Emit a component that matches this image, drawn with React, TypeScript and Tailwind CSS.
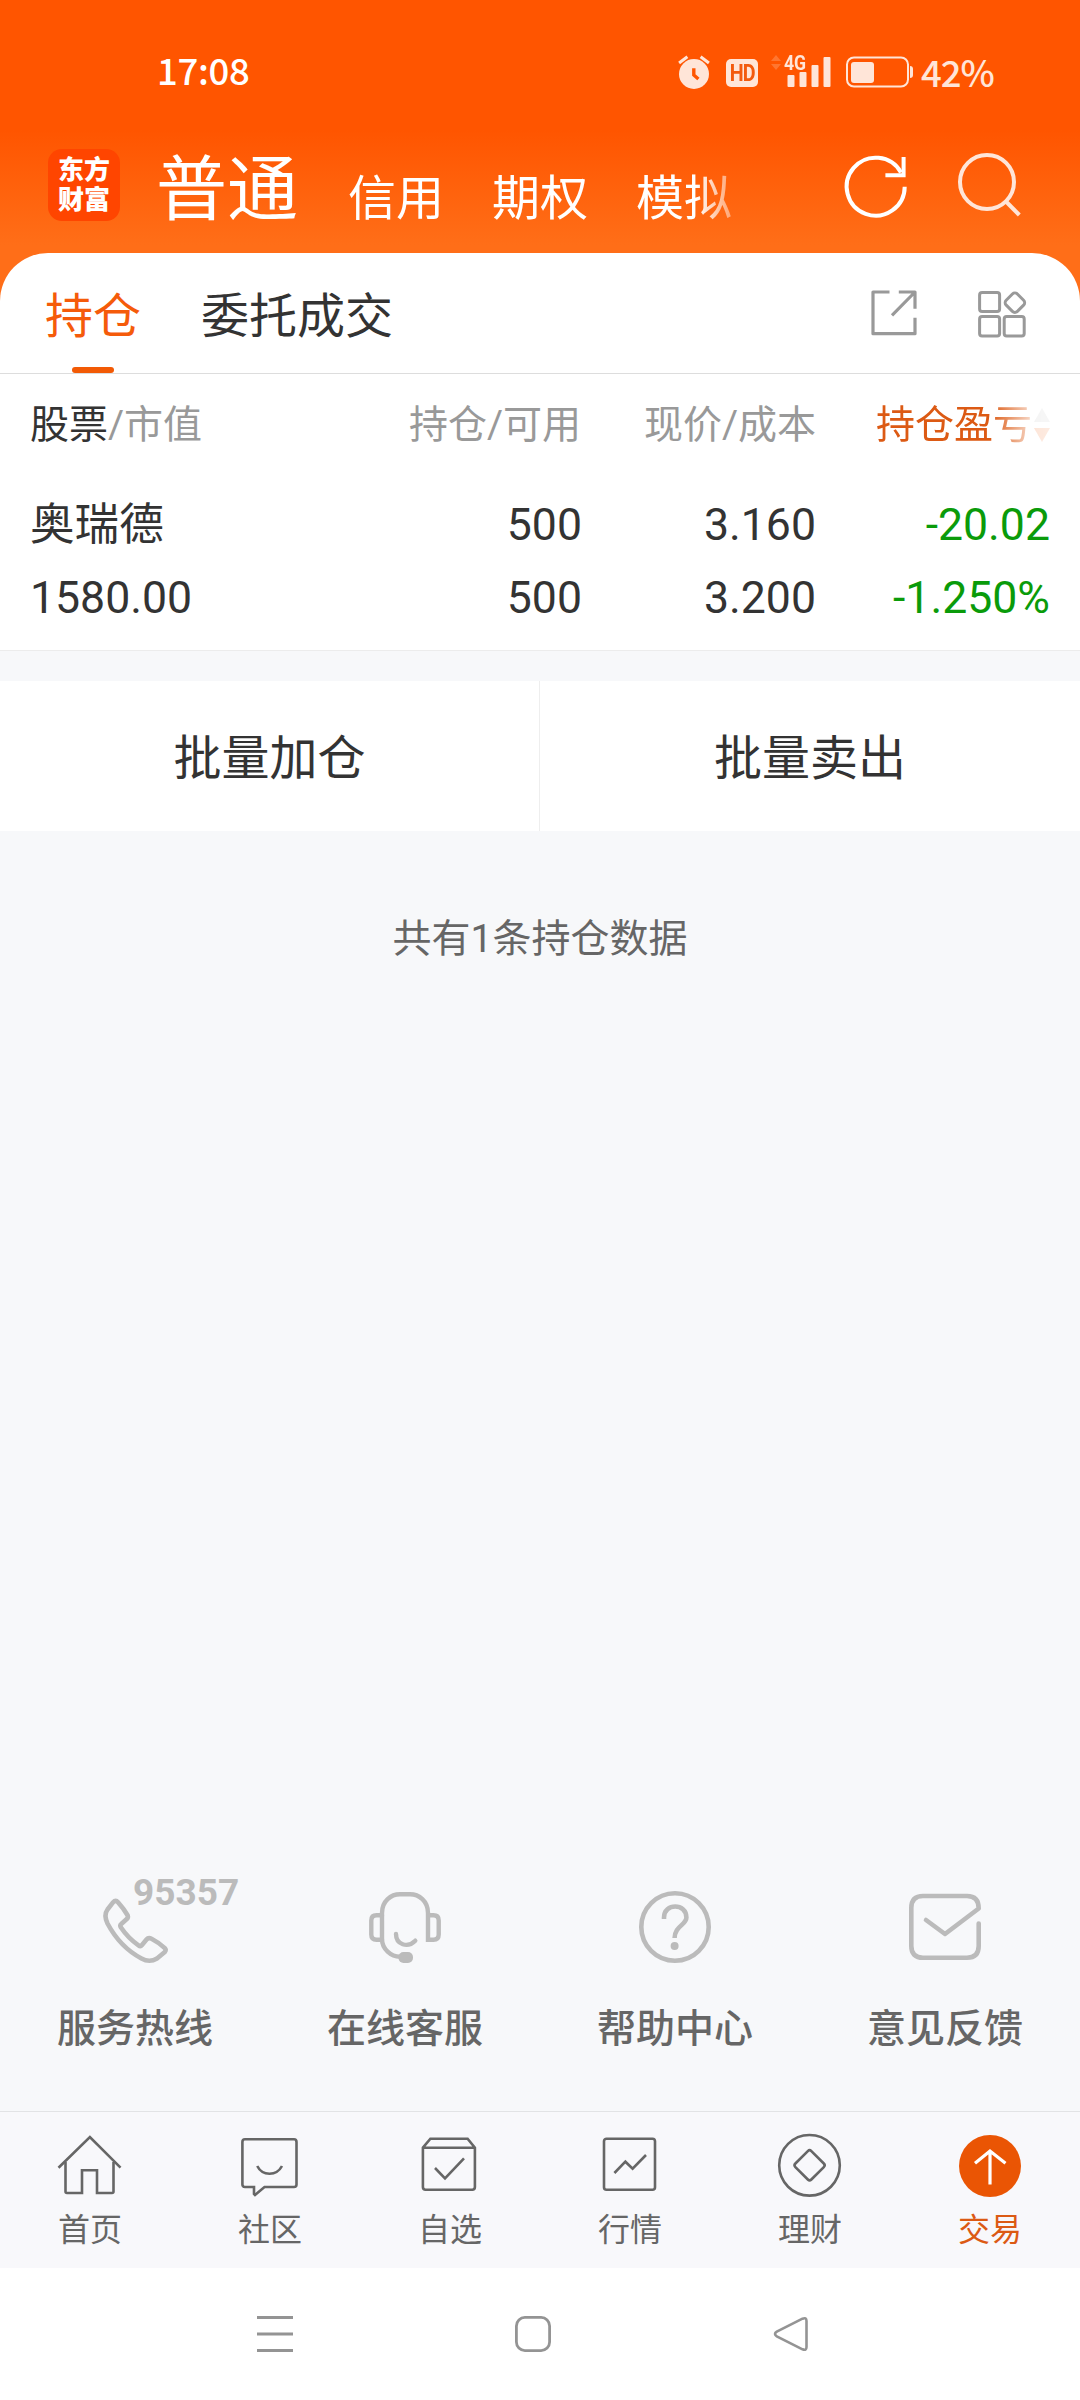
import React from 'react';

const StatusBar: React.FC = () => (
  <div className="h-[124px] pt-[49px] pl-[157px] pr-[87px] flex items-start justify-between font-['Noto_Sans_CJK_SC',sans-serif]">
    <span className="-mt-[3px] text-[36.5px] leading-[48px] font-medium text-white tracking-[-0.3px]">17:08</span>
    <div className="flex items-start text-[#ffe5d8]">
      <svg className="w-8 h-[34px] mt-1.5 overflow-visible" viewBox="0 0 32 34" fill="none">
        <circle cx="16" cy="19" r="15" fill="currentColor" />
        <path d="M1.1 8L9.4 1.7M30.9 8L22.6 1.7" stroke="currentColor" strokeWidth="3" />
        <path d="M15.8 13.3V20L20.4 24" stroke="#ff5500" strokeWidth="3.4" />
      </svg>
      <div className="w-8 h-7 mt-2.5 ml-4 rounded-[5px] bg-[#ffe5d8] flex items-center justify-center">
        <span className="font-['Roboto',sans-serif] font-bold text-[24px] leading-7 tracking-[-1px] scale-x-[0.82] text-[#f35a0e]">HD</span>
      </div>
      <svg className="w-[10px] h-4 mt-1.5 ml-[13px]" viewBox="0 0 10 16" fill="#ff7630">
        <path d="M5 0L10 6H0ZM5 15L0 9H10Z" />
      </svg>
      <div className="relative w-[50px] h-8 mt-1.5 ml-[3px]">
        <svg className="w-[50px] h-8" viewBox="0 0 50 32" fill="currentColor">
          <rect x="3.5" y="20" width="7" height="12" rx="1" />
          <rect x="15.5" y="17" width="7" height="15" rx="1" />
          <rect x="27.5" y="10" width="7" height="22" rx="1" />
          <rect x="39.5" y="2" width="7" height="30" rx="1" />
        </svg>
        <span className="absolute left-0 top-0 origin-left scale-x-[0.84] font-['Roboto',sans-serif] font-bold text-[21px] leading-4">4G</span>
      </div>
      <svg className="w-[68px] h-8 mt-[7px] ml-3" viewBox="0 0 68 32" fill="none">
        <rect x="1" y="1.5" width="61" height="29" rx="7" stroke="currentColor" strokeWidth="2" />
        <rect x="5" y="6" width="23" height="21" rx="3" fill="currentColor" />
        <path d="M64 10q3 0 3 3v6q0 3-3 3z" fill="currentColor" />
      </svg>
      <span className="w-[72px] -mt-0.5 ml-[7px] text-[36.5px] leading-[50px] font-medium tracking-[-1px] whitespace-nowrap">42%</span>
    </div>
  </div>
);

const Header: React.FC = () => (
  <header className="h-[301px] bg-[linear-gradient(to_bottom,#ff5500_130px,#ff6e18_245px)] text-white">
    <StatusBar />
    <div className="flex items-start pl-12">
      <div className="w-[72px] h-[72px] mt-[25px] rounded-[14px] bg-[#ff4500] flex items-center justify-center text-center text-[26px] leading-[30px] font-black">
        东方
        <br />
        财富
      </div>
      <nav className="w-[660px] h-[100px] pl-9 flex gap-12 text-5xl [mask-image:linear-gradient(to_right,black_576px,transparent_636px)]">
        <span className="w-36 text-[71px] leading-[84px] pt-6">普通</span>
        <span className="leading-[58px] pt-[46px]">信用</span>
        <span className="leading-[58px] pt-[46px]">期权</span>
        <span className="leading-[58px] pt-[46px]">模拟</span>
      </nav>
      <svg className="w-[62px] h-[62px] mt-[31px] ml-[65px] overflow-visible" viewBox="0 0 62 62" fill="none" stroke="currentColor" strokeWidth="4">
        <path d="M59.7 31.7A29 29 0 1 1 56 17.5" />
        <path d="M40.4 20.3H58.6V2" />
      </svg>
      <svg className="w-[62px] h-[62px] mt-[29px] ml-[51px] overflow-visible text-[#ffe5d8]" viewBox="0 0 62 62" fill="none" stroke="currentColor" strokeWidth="4">
        <circle cx="29" cy="29" r="27" />
        <path d="M47.5 48L61.3 62" />
      </svg>
    </div>
  </header>
);

const Tabs: React.FC = () => (
  <div className="h-[121px] pl-[45px] pr-[53px] flex items-start border-b border-[#dddddd] text-5xl">
    <div className="w-24 h-[120px] flex flex-col items-center justify-between text-[#f55b0a]">
      <span className="pt-[35px] leading-[58px]">持仓</span>
      <span className="w-[42px] h-[6px] rounded-full bg-[#f25a05]" />
    </div>
    <span className="ml-[60px] pt-[35px] leading-[58px] text-[#333333]">委托成交</span>
    <svg className="w-[47px] h-[47px] mt-[37px] ml-auto" viewBox="0 0 47 47" fill="none" stroke="#999999" strokeWidth="3.2" strokeLinejoin="round">
      <path d="M18.5 2H2V43.7H44V27.7" />
      <path d="M27.8 2H44V18.7M44 2L21 25.3" />
    </svg>
    <svg className="w-[50px] h-[50px] mt-[37px] ml-[59px]" viewBox="0 0 50 50" fill="none" stroke="#999999" strokeWidth="3">
      <rect x="2.6" y="2.5" width="20" height="19" rx="2.5" />
      <rect x="2.6" y="26.6" width="20" height="19.4" rx="2.5" />
      <rect x="27.2" y="26.6" width="20" height="19.4" rx="2.5" />
      <rect x="30" y="4.8" width="15.8" height="15.8" rx="3.5" transform="rotate(45 37.9 12.7)" />
    </svg>
  </div>
);

const Holdings: React.FC = () => (
  <section className="h-[277px] pl-[30px] pr-[30px] border-b border-[#ececec] text-[#333333]">
    <div className="flex pt-[26px] text-[39px] leading-[50px] text-[#999999]">
      <div className="w-[304px]">
        <span className="text-[#333333]">股票</span>/市值
      </div>
      <div className="w-[247px] text-right">持仓/可用</div>
      <div className="w-[235px] text-right">现价/成本</div>
      <div className="w-[234px] flex items-center justify-end text-[#dc5a14] [mask-image:linear-gradient(to_right,black_174px,rgba(0,0,0,0.15)_220px,rgba(0,0,0,0.12))]">
        持仓盈亏
        <svg className="w-4 h-[34px] ml-0.5" viewBox="0 0 16 34">
          <path d="M8 0L16 14H0Z" fill="#bbbbbb" />
          <path d="M8 34L0 20H16Z" fill="#f25a05" />
        </svg>
      </div>
    </div>
    <div className="flex pt-[39px] text-[44.6px] leading-[73px]">
      <div className="w-[304px]">
        奥瑞德
        <br />
        1580.00
      </div>
      <div className="w-[248px] text-right">
        500
        <br />
        500
      </div>
      <div className="w-[234px] text-right">
        3.160
        <br />
        3.200
      </div>
      <div className="w-[234px] text-right text-[#0a9b0a]">
        -20.02
        <br />
        -1.250%
      </div>
    </div>
  </section>
);

const services = [
  {
    label: '服务热线',
    icon: (
      <div className="relative w-[72px] h-[72px]">
        <svg className="w-[72px] h-[72px] overflow-visible" viewBox="-4 -7 72 72" fill="none" stroke="currentColor" strokeWidth="4.6" strokeLinejoin="round">
          <path d="M10.2 4.2Q12.6 1.5 15 4.3Q21 11 24.7 17.5Q25.5 19.5 23.5 21.3L18.5 25.8Q16.5 27.5 18 29.5Q25 40 35.5 47.3Q37.5 48.8 39 47L43.5 41.5Q45.5 39 48.5 40.7Q56 44.5 61.8 50.2Q63.5 52 61.8 54L54 60.5Q46.5 65 38.5 60.5Q17 49 4.5 25.5Q.5 17 4.5 11.5Z" />
        </svg>
        <span className="absolute left-[34px] -top-[14px] text-[37px] leading-[32px] font-bold">95357</span>
      </div>
    ),
  },
  {
    label: '在线客服',
    icon: (
      <svg className="w-[72px] h-[72px] overflow-visible" viewBox="0 -1 72 72" fill="none" stroke="currentColor" strokeWidth="4.4" strokeLinecap="round">
        <path d="M13 23.3H7.5Q2.3 23.3 2.3 28.5V42.5Q2.3 47.7 7.5 47.7H13" />
        <path d="M59 23.3H64.5Q69.7 23.3 69.7 28.5V42.5Q69.7 47.7 64.5 47.7H59V21C59 9 50 2.3 41 2.3H31C22 2.3 13 9 13 21V47C13 57 22 64.7 31 64.7" />
        <path d="M27 42C27 52.5 38.5 56.5 46.3 48.7" />
        <rect x="29.5" y="60" width="14.5" height="11" rx="5" fill="currentColor" stroke="none" />
      </svg>
    ),
  },
  {
    label: '帮助中心',
    icon: (
      <svg className="w-[72px] h-[72px]" viewBox="0 0 72 72" fill="none" stroke="currentColor" strokeWidth="4.6">
        <circle cx="36" cy="36" r="33.7" />
        <path d="M25 28V26.5C25 11.9 47.4 11.9 47.4 26.5C47.4 34 35.6 35 35.6 47" />
        <circle cx="35.6" cy="55" r="4" fill="currentColor" stroke="none" />
      </svg>
    ),
  },
  {
    label: '意见反馈',
    icon: (
      <svg className="w-[72px] h-[72px]" viewBox="0 -3 72 72" fill="none" stroke="currentColor" strokeWidth="4.6" strokeLinecap="round" strokeLinejoin="round">
        <path d="M69.7 29.5V52Q69.7 63.7 58 63.7H14Q2.3 63.7 2.3 52V14Q2.3 2 14 2H58Q69.7 2 69.7 14.5L36 40L17 26" />
      </svg>
    ),
  },
];

const navItems = [
  {
    label: '首页',
    icon: (
      <>
        <path d="M.5 33.7L31.9 3L62.5 33.7" />
        <path d="M7.5 28V57.5Q7.5 59 9 59H24V36.3H39V59H54Q55.5 59 55.5 57.5V28" />
      </>
    ),
  },
  {
    label: '社区',
    icon: (
      <>
        <path d="M7 5.3H56Q58.5 5.3 58.5 8V50.5Q58.5 53 56 53H26.5L17 61L16 60V53H7Q4.4 53 4.4 50.5V8Q4.4 5.3 7 5.3Z" />
        <path d="M19.2 32C24.5 42.3 38.5 42.3 44 32" />
      </>
    ),
  },
  {
    label: '自选',
    icon: (
      <>
        <path d="M4.9 13.7L12.4 4.7H49.6L56.9 13.7V53Q56.9 55.7 54.3 55.7H7.5Q4.9 55.7 4.9 53ZH56.9" />
        <path d="M17 34L27 44.3L46 24.3" />
      </>
    ),
  },
  {
    label: '行情',
    icon: (
      <>
        <rect x="6" y="4.7" width="51" height="51" rx="2.5" />
        <path d="M16.4 39L27.4 27.7L34.6 34.7L48 21" />
      </>
    ),
  },
  {
    label: '理财',
    icon: (
      <>
        <circle cx="31.5" cy="31.3" r="30.3" />
        <rect x="20.3" y="20" width="22.6" height="22.6" rx="2.5" transform="rotate(45 31.6 31.3)" />
      </>
    ),
  },
  {
    label: '交易',
    active: true,
    icon: (
      <>
        <circle cx="32" cy="32" r="31" fill="#ea5504" stroke="none" />
        <path d="M32 50.5V17M17 29.3L32 17L47.5 29.3" stroke="#ffffff" strokeWidth="3.2" />
      </>
    ),
  },
];

const App: React.FC = () => {
  return (
    <div className="w-[1080px] h-[2400px] flex flex-col overflow-hidden bg-[#f7f8fa] font-['Roboto','Noto_Sans_CJK_SC',sans-serif]">
      <Header />
      <main className="-mt-12 rounded-t-[48px] bg-white">
        <Tabs />
        <Holdings />
      </main>

      <div className="mt-[30px] h-[150px] flex bg-white text-5xl text-[#333333]">
        <button className="w-[540px] pt-1.5 border-r border-[#eeeeee]">批量加仓</button>
        <button className="w-[540px] pt-1.5">批量卖出</button>
      </div>
      <p className="mt-[83px] text-center text-[39px] leading-[50px] text-[#666666]">共有1条持仓数据</p>

      <div className="mt-auto h-[220px] grid grid-cols-4">
        {services.map((s) => (
          <div key={s.label} className="flex flex-col items-center text-[#bbbbbb]">
            {s.icon}
            <span className="mt-[41px] text-[39px] leading-[50px] font-medium text-[#666666]">{s.label}</span>
          </div>
        ))}
      </div>

      <nav className="h-[157px] grid grid-cols-6 border-t border-[#e2e3e5] bg-[#f8f8fb]">
        {navItems.map((item) => (
          <div key={item.label} className="pt-[22px] flex flex-col items-center text-[#666666]">
            <svg className="w-16 h-16 overflow-visible" viewBox="0 0 64 64" fill="none" stroke="currentColor" strokeWidth="2.6">
              {item.icon}
            </svg>
            <span className={item.active ? 'mt-3 text-[32px] leading-10 text-[#dc5a14]' : 'mt-3 text-[32px] leading-10'}>
              {item.label}
            </span>
          </div>
        ))}
      </nav>

      <div className="h-[132px] pt-12 pl-[257px] pr-[271px] flex items-start justify-between bg-white text-[#949494]">
        <svg className="w-9 h-9" viewBox="0 0 36 36" fill="none" stroke="currentColor" strokeWidth="3">
          <path d="M0 1.6H36M0 18H36M0 34.4H36" />
        </svg>
        <svg className="w-9 h-9" viewBox="0 0 36 36" fill="none" stroke="currentColor" strokeWidth="2.8">
          <rect x="1.4" y="1.4" width="33.2" height="33.2" rx="8.5" />
        </svg>
        <svg className="w-9 h-9" viewBox="0 0 36 36" fill="none" stroke="currentColor" strokeWidth="2.6">
          <path d="M29.5 2.7Q33.5 1 33.5 5V31Q33.5 35 29.5 33.3L3.8 20.3Q.2 18 3.8 15.7Z" />
        </svg>
      </div>
    </div>
  );
};

export default App;
